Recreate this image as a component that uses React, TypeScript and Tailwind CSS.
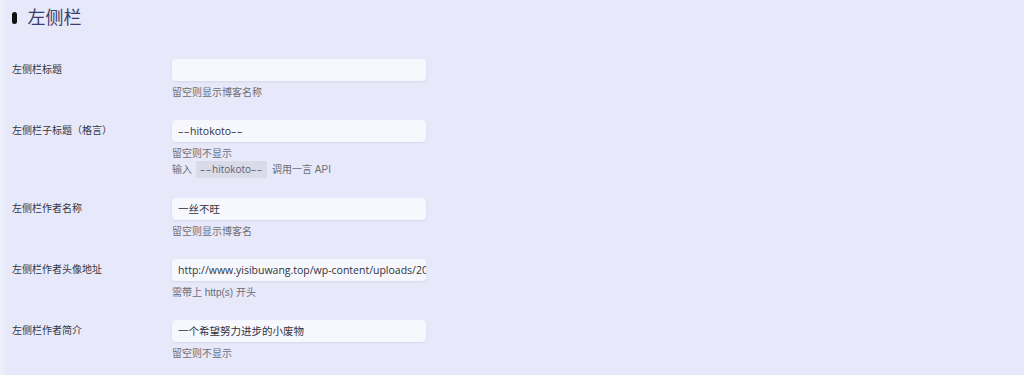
import React from "react";

const font = { fontFamily: '"Liberation Sans", "Noto Sans CJK SC", sans-serif' };
const wide = { fontFamily: '"Open Sans", "Noto Sans CJK SC", sans-serif' };

function OneDash() {
  return (
    <span className="inline-block w-[6px] text-center">
      <span className="inline-block scale-x-[1.7]">-</span>
    </span>
  );
}

function Dash() {
  return (
    <>
      <OneDash />
      <OneDash />
    </>
  );
}

function Row({
  label,
  value,
  children,
}: {
  label: string;
  value: React.ReactNode;
  children: React.ReactNode;
}) {
  return (
    <div className="flex">
      <div className="w-[160px] shrink-0 text-[10px] leading-[22px] text-[#333642]">{label}</div>
      <div className="w-[254px]">
        <div
          className="h-[22px] w-full rounded-[4px] bg-[#f7f8fd] shadow-[0_1px_2px_rgba(80,85,140,0.12)] pl-[6px] pr-[2px] text-[10.5px] leading-[22px] text-[#30323c] overflow-hidden whitespace-nowrap"
          style={wide}
        >
          {value}
        </div>
        <div className="mt-[4px] text-[10px] leading-[15px] text-[#6b6d78]">{children}</div>
      </div>
    </div>
  );
}

export default function App() {
  return (
    <div
      className="min-h-[375px] w-full bg-[#e7e9fa] pl-[12px] pt-[8px] bg-[linear-gradient(to_right,#eef0fb_0px,#e7e9fa_8px)]"
      style={font}
    >
      <div className="flex items-center h-[20px]">
        <span className="h-[12px] w-[4.5px] rounded-full bg-[#111]" />
        <span className="ml-[11px] text-[18px] leading-[20px] text-[#3a3d6b]">左侧栏</span>
      </div>
      <div className="mt-[31px] flex flex-col gap-[20px]">
        <Row label="左侧栏标题" value="">
          <div>留空则显示博客名称</div>
        </Row>
        <Row
          label="左侧栏子标题（格言）"
          value={
            <>
              <Dash />hitokoto<Dash />
            </>
          }
        >
          <div>留空则不显示</div>
          <div className="flex items-center h-[17px]">
            <span>输入</span>
            <span
              className="ml-[4px] inline-block h-[17px] bg-[#d9dbe8] px-[4px] leading-[17px] text-[#5f616c]"
              style={wide}
            >
              <Dash />hitokoto<Dash />
            </span>
            <span className="ml-[5px]">调用一言 API</span>
          </div>
        </Row>
        <Row label="左侧栏作者名称" value="一丝不旺">
          <div>留空则显示博客名</div>
        </Row>
        <Row label="左侧栏作者头像地址" value="http://www.yisibuwang.top/wp-content/uploads/2021/01/avatar.png">
          <div>需带上 http(s) 开头</div>
        </Row>
        <Row label="左侧栏作者简介" value="一个希望努力进步的小废物">
          <div>留空则不显示</div>
        </Row>
      </div>
    </div>
  );
}
